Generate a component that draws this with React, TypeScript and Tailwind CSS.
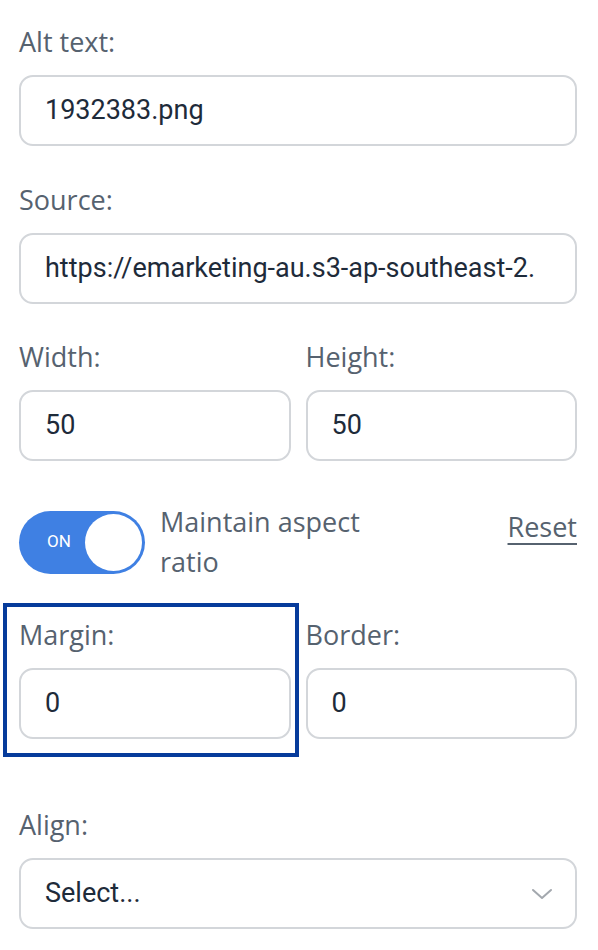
import React from "react";

const labelFont = { fontFamily: "'Open Sans', 'Noto Sans', sans-serif" };
const inputFont = { fontFamily: "Roboto, 'Liberation Sans', sans-serif" };

function Label({ children }: { children: React.ReactNode }) {
  return (
    <div className="text-[27px] leading-[32px] text-[#56626f] mb-[17px]" style={labelFont}>
      {children}
    </div>
  );
}

function Field({ value }: { value: string }) {
  return (
    <div
      className="h-[71px] rounded-[14px] border-2 border-[#d3d6da] bg-white flex items-center pl-[24px] pr-3 whitespace-nowrap text-[27px] text-[#1e2b3a]"
      style={inputFont}
    >
      {value}
    </div>
  );
}

export default function App() {
  return (
    <div className="w-[598px] h-[950px] bg-white pl-[19px] pr-[21px] pt-[26px] overflow-hidden">
      {/* alt text */}
      <Label>Alt text:</Label>
      <Field value="1932383.png" />

      {/* source */}
      <div className="mt-[38px]">
        <Label>Source:</Label>
        <Field value="https://emarketing-au.s3-ap-southeast-2." />
      </div>

      {/* size */}
      <div className="mt-[37px] grid grid-cols-2 gap-[15px]">
        <div>
          <Label>Width:</Label>
          <Field value="50" />
        </div>
        <div>
          <Label>Height:</Label>
          <Field value="50" />
        </div>
      </div>

      {/* aspect ratio toggle */}
      <div className="mt-[41px] flex items-center">
        <button className="relative w-[126px] h-[63px] rounded-full bg-[#3f80e3] flex items-center shrink-0">
          <span className="pl-[28px] text-[17px] text-white" style={inputFont}>
            ON
          </span>
          <span className="absolute right-[3px] top-[3px] w-[57px] h-[57px] rounded-full bg-white" />
        </button>
        <div className="ml-[15px] text-[27px] leading-[40px] text-[#56626f] w-[240px]" style={labelFont}>
          Maintain aspect ratio
        </div>
        <a className="ml-auto self-start mt-[9px] text-[27px] leading-[32px] text-[#56626f] underline underline-offset-[6px] decoration-2" style={labelFont}>
          Reset
        </a>
      </div>

      {/* margin / border */}
      <div className="mt-[37px] grid grid-cols-2 gap-[15px]">
        <div className="relative">
          <div className="absolute -left-[16px] -right-[8px] -top-[16px] -bottom-[18px] border-4 border-[#063b9b]" />
          <Label>Margin:</Label>
          <Field value="0" />
        </div>
        <div>
          <Label>Border:</Label>
          <Field value="0" />
        </div>
      </div>

      {/* align */}
      <div className="mt-[70px]">
        <Label>Align:</Label>
        <div
          className="h-[71px] rounded-[14px] border-2 border-[#d3d6da] bg-white flex items-center justify-between pl-[24px] pr-[22px] text-[27px] text-[#1e2b3a]"
          style={inputFont}
        >
          <span>Select...</span>
          <svg width="22" height="14" viewBox="0 0 22 14" fill="none">
            <path d="M2 3l9 8 9-8" stroke="#a3a8ae" strokeWidth="2" strokeLinecap="round" strokeLinejoin="round" />
          </svg>
        </div>
      </div>
    </div>
  );
}
